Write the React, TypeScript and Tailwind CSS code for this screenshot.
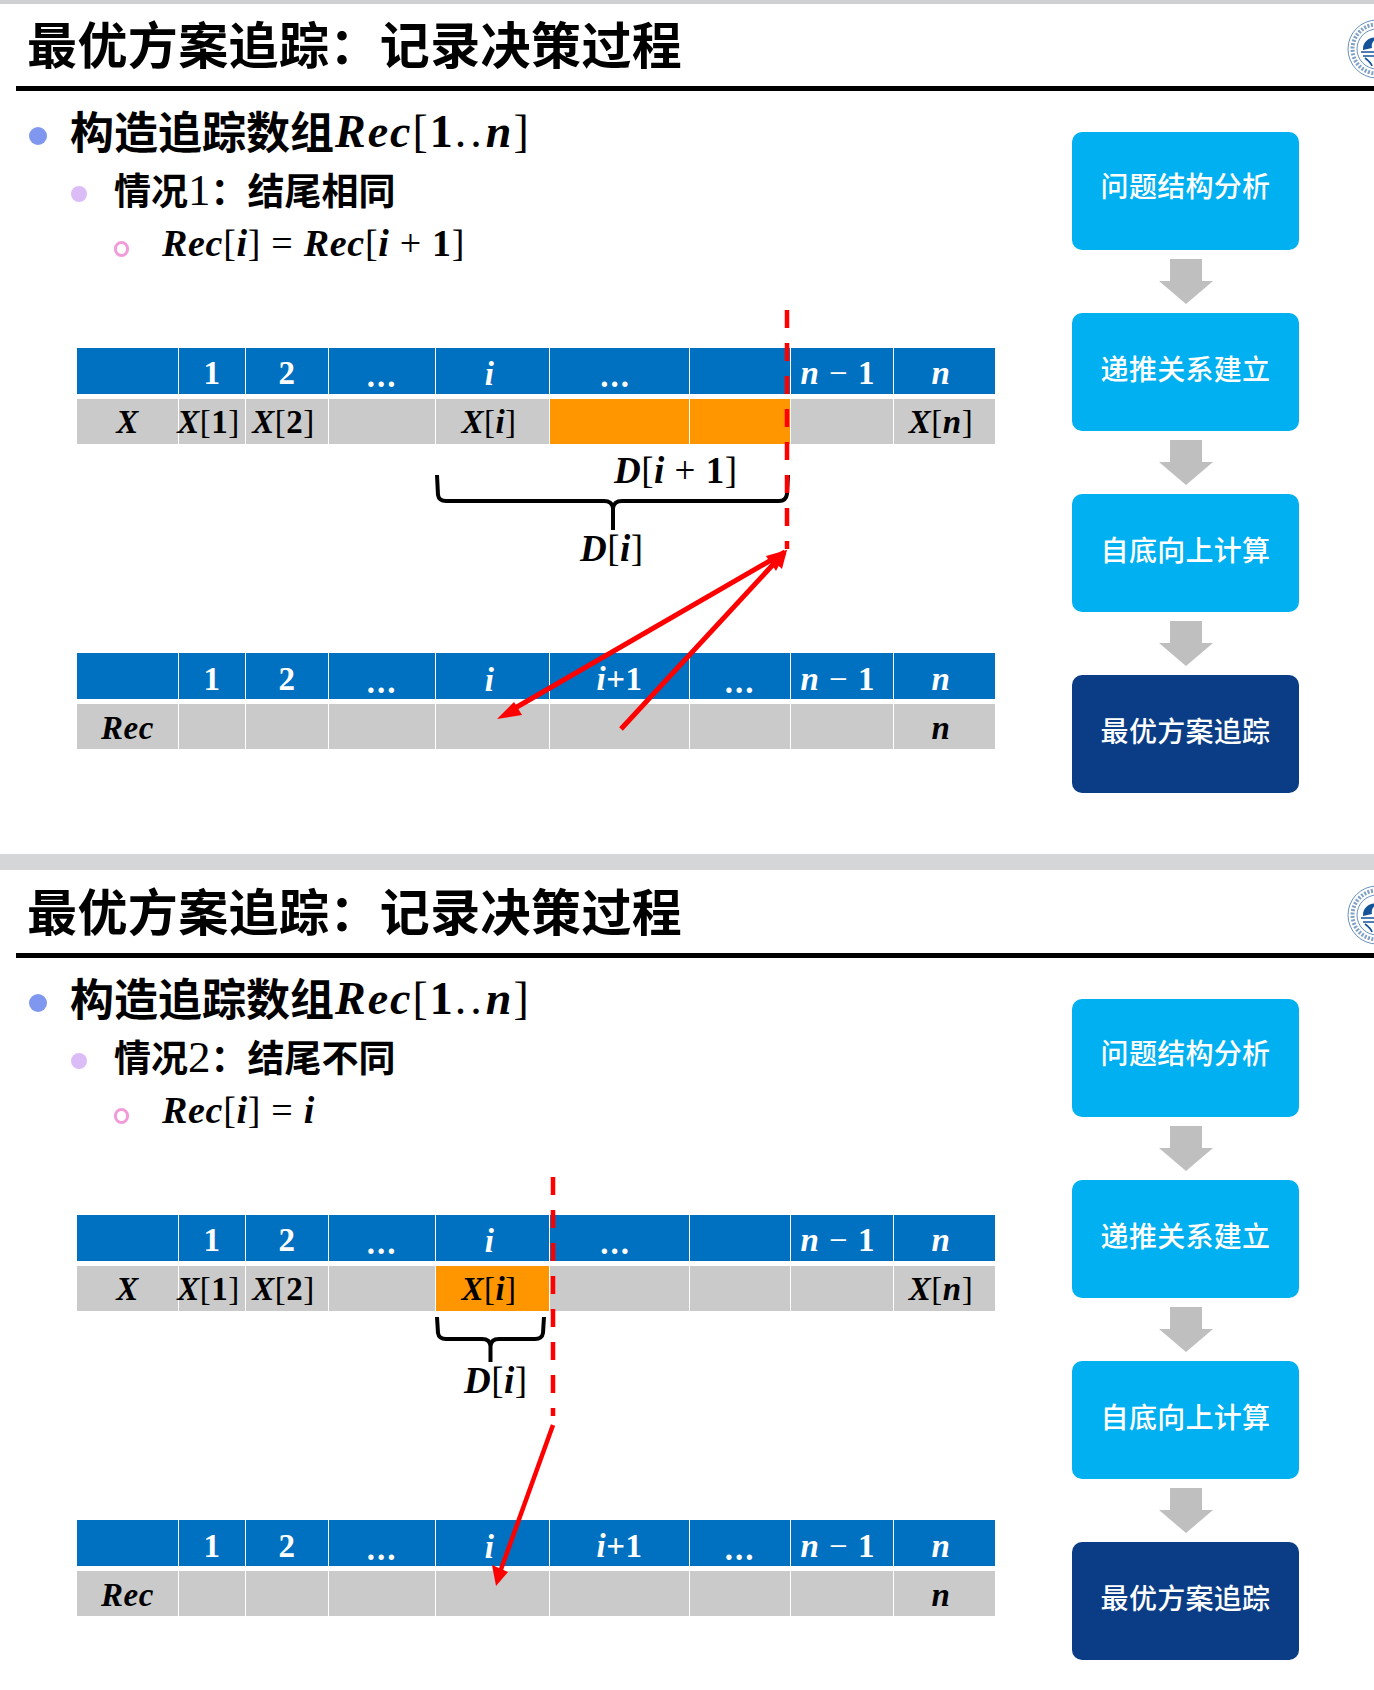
import React from "react";

const Mi = ({ children }: { children: React.ReactNode }) => <span className="font-bold italic">{children}</span>;
const Mb = ({ children }: { children: React.ReactNode }) => <span className="font-bold not-italic">{children}</span>;
const Br = ({ children }: { children: React.ReactNode }) => <span className="font-normal not-italic">{children}</span>;

const Sub = ({ v }: { v: React.ReactNode }) => (
  <span className="font-['Liberation_Serif',serif] tracking-[0.5px] whitespace-nowrap">
    {v}
  </span>
);

const Xi = ({ n, bold }: { n: string; bold?: boolean }) => (
  <Sub
    v={
      <>
        <Mi>X</Mi>
        <Br>[</Br>
        {bold ? <Mb>{n}</Mb> : <Mi>{n}</Mi>}
        <Br>]</Br>
      </>
    }
  />
);

const Dots = () => <span className="font-['Liberation_Serif',serif] font-bold tracking-[2px] pt-[6px] block">...</span>;
const I = ({ t }: { t: string }) => <Sub v={<Mi>{t}</Mi>} />;
const D1 = ({ t }: { t: string }) => <Sub v={<Mb>{t}</Mb>} />;
const N1 = () => (
  <span className="font-['Liberation_Serif',serif] whitespace-nowrap font-bold pr-[8px] tracking-[1px]">
    <i>n</i> <span className="font-normal">−</span> 1
  </span>
);

type Cell = { c?: React.ReactNode; o?: boolean; pr?: boolean };

function Row({ cells, head, low }: { cells: Cell[]; head?: boolean; low?: boolean }) {
  const pad = head ? (low ? "pt-[7px]" : "pt-[5px]") : low ? "pt-[3px]" : "pt-[1px]";
  return (
    <>
      {cells.map((x, i) => (
        <div
          key={i}
          className={`flex items-center justify-center text-[33px] leading-none ${head ? "h-[46px] text-white" : "h-[45px] text-black"} ${
            x.o ? "bg-[#ff9600]" : head ? "bg-[#0070c0]" : "bg-[#cacaca]"
          } ${x.pr ? "pr-[7px]" : ""} ${pad}`}
        >
          {x.c}
        </div>
      ))}
    </>
  );
}

function Table({ head, row, low }: { head: Cell[]; row: Cell[]; low?: boolean }) {
  return (
    <div className="grid grid-cols-[101px_66px_82px_106px_113px_139px_100px_102px_101px] gap-x-px gap-y-[5px] w-fit ml-[77px]">
      <Row cells={head} head low={low} />
      <Row cells={row} low={low} />
    </div>
  );
}

const Logo = () => (
  <svg width="60" height="60" viewBox="0 0 60 60" className="shrink-0" aria-hidden="true">
    <circle cx="30" cy="30" r="29" fill="none" stroke="#3f73ad" strokeWidth="0.8" />
    <circle cx="30" cy="30" r="24.5" fill="none" stroke="#4a78ad" strokeWidth="4" strokeDasharray="2 1.5" opacity="0.7" />
    <circle cx="30" cy="30" r="20" fill="none" stroke="#3f73ad" strokeWidth="0.8" />
    <path d="M16 30 C16 22 24 17 31 19 C26 21 24 25 25 29 L16 31 Z" fill="#14539a" />
    <path d="M14 33 L40 33 M16 37 L38 37" stroke="#14539a" strokeWidth="1.6" />
    <path d="M18 39 C22 42 24 44 25 47" stroke="#14539a" strokeWidth="1.6" fill="none" />
  </svg>
);

const FlowArrow = () => (
  <svg width="54" height="45" viewBox="0 0 54 45" className="my-[9px] self-center" aria-hidden="true">
    <polygon points="11,0 43,0 43,22 54,22 27,45 0,22 11,22" fill="#bfbfbf" />
  </svg>
);

const Box = ({ t, dark, first }: { t: string; dark?: boolean; first?: boolean }) => (
  <div
    className={`w-[227px] h-[118px] rounded-[10px] flex items-center justify-center ${first ? "pb-[12px]" : "pb-[8px]"} text-[28px] tracking-[0.3px] font-medium text-white font-['Noto_Sans_CJK_SC',sans-serif] ${
      dark ? "bg-[#0a3d85]" : "bg-[#00b0f0]"
    }`}
  >
    {t}
  </div>
);

function Flow() {
  return (
    <div className="flex flex-col pt-[41px]">
      <Box t="问题结构分析" first />
      <FlowArrow />
      <Box t="递推关系建立" />
      <FlowArrow />
      <Box t="自底向上计算" />
      <FlowArrow />
      <Box t="最优方案追踪" dark />
    </div>
  );
}

const DotB = ({ cls }: { cls: string }) => <span className={`block shrink-0 rounded-full ${cls}`} />;

function Bullets({ label, digit, rest, third }: { label: string; digit: string; rest: string; third: React.ReactNode }) {
  return (
    <div className="font-['Noto_Sans_CJK_SC',sans-serif] font-bold text-black">
      <div className="flex items-center h-[44px] mt-[19px] pl-[29px]">
        <DotB cls="w-[18px] h-[18px] bg-[#7f97ee] mt-[8px]" />
        <div className="ml-[23px] pb-[5px] flex items-center text-[44px] leading-none whitespace-nowrap">
          构造追踪数组
          <span className="font-['Liberation_Serif',serif] text-[46px] tracking-[2px] ml-[1px] pt-[4px]">
            <Mi>Rec</Mi>
            <Br>[</Br>
            <Mb>1</Mb>
            <span className="font-normal tracking-[4px]">..</span>
            <Mi>n</Mi>
            <Br>]</Br>
          </span>
        </div>
      </div>
      <div className="flex items-center h-[38px] mt-[17px] pl-[71px]">
        <DotB cls="w-[16px] h-[16px] bg-[#dcbcf7] mt-[8px]" />
        <div className="ml-[27px] text-[37px] leading-none whitespace-nowrap">
          {label}
          <span className="font-['Liberation_Serif',serif] font-normal text-[45px] leading-none">{digit}</span>
          {rest}
        </div>
      </div>
      <div className="flex items-center h-[36px] mt-[19px] pl-[114px]">
        <span className="block shrink-0 w-[15px] h-[16px] rounded-full border-[3px] border-[#f29bd9] mt-[5px]" />
        <div className="ml-[33px] pb-[6px] text-[38px] leading-none whitespace-nowrap font-['Liberation_Serif',serif] tracking-[0.7px]">{third}</div>
      </div>
    </div>
  );
}

const ShiftedI = () => (
  <span className="pr-[6px]">
    <I t="i" />
  </span>
);

const head1: Cell[] = [
  {},
  { c: <D1 t="1" /> },
  { c: <D1 t="2" /> },
  { c: <Dots /> },
  { c: <ShiftedI /> },
  { c: <span className="pr-[8px]"><Dots /></span> },
  {},
  { c: <N1 /> },
  { c: <I t="n" />, pr: true },
];
const head2: Cell[] = [
  {},
  { c: <D1 t="1" /> },
  { c: <D1 t="2" /> },
  { c: <Dots /> },
  { c: <ShiftedI /> },
  {
    c: (
      <Sub
        v={
          <>
            <Mi>i</Mi>
            <Mb>+1</Mb>
          </>
        }
      />
    ),
  },
  { c: <Dots /> },
  { c: <N1 /> },
  { c: <I t="n" />, pr: true },
];
const recRow: Cell[] = [
  { c: <I t="Rec" /> },
  {},
  {},
  {},
  {},
  {},
  {},
  {},
  { c: <I t="n" />, pr: true },
];

const Label = ({ children, cls }: { children: React.ReactNode; cls: string }) => (
  <div className={`absolute text-[37px] leading-none text-black whitespace-nowrap ${cls}`}>
    <Sub v={children} />
  </div>
);

function Slide({
  label,
  digit,
  rest,
  third,
  row,
  headH,
  overlay,
  h,
}: {
  label: string;
  digit: string;
  rest: string;
  third: React.ReactNode;
  row: Cell[];
  headH: string;
  overlay: React.ReactNode;
  h: string;
}) {
  return (
    <div className={`relative bg-white overflow-hidden ${h}`}>
      <div className={`flex items-center justify-between pl-[27px] ${headH}`}>
        <div className="font-['Noto_Sans_CJK_SC',sans-serif] font-bold text-[50px] tracking-[0.4px] leading-none text-black whitespace-nowrap pb-[6px]">
          最优方案追踪：记录决策过程
        </div>
        <div className="w-[27px] overflow-hidden self-start mt-[15px]">
          <Logo />
        </div>
      </div>
      <div className="h-[5px] bg-black ml-[16px]" />
      <div className="flex">
        <div className="w-[1072px] shrink-0">
          <Bullets label={label} digit={digit} rest={rest} third={third} />
          <div className="mt-[84px]">
            <Table head={head1} row={row} />
          </div>
          <div className="mt-[209px]">
            <Table head={head2} row={recRow} low />
          </div>
        </div>
        <Flow />
      </div>
      {overlay}
    </div>
  );
}

const Dash = ({ x, y1, y2 }: { x: number; y1: number; y2: number }) => (
  <line x1={x} y1={y1} x2={x} y2={y2} stroke="#ff0000" strokeWidth="4.5" strokeDasharray="18 15" />
);

function Overlay1() {
  return (
    <>
      <svg className="absolute left-0 top-0" width="1374" height="850" viewBox="0 4 1374 850" aria-hidden="true">
        <path
          d="M437 475 L438 495 Q439 501 446 501 L604 501 Q612 501 613 508 L613 530 M613 508 Q614 501 622 501 L779 501 Q786 501 787 494 L788 475"
          fill="none"
          stroke="#000"
          strokeWidth="4"
        />
        <Dash x={787} y1={310} y2={549} />
        <line x1="621" y1="729" x2="780" y2="557" stroke="#ff0000" strokeWidth="5" />
        <polygon points="787,550 782,569 770,558" fill="#ff0000" />
        <line x1="785" y1="552" x2="510" y2="711" stroke="#ff0000" strokeWidth="5" />
        <polygon points="497,719 514,702 522,715" fill="#ff0000" />
        <polygon points="787,550 766,556 776,571" fill="#ff0000" />
      </svg>
      <Label cls="left-[614px] top-[446px]">
        <Mi>D</Mi>
        <Br>[</Br>
        <Mi>i</Mi>
        <Br> + </Br>
        <Mb>1</Mb>
        <Br>]</Br>
      </Label>
      <Label cls="left-[580px] top-[524px]">
        <Mi>D</Mi>
        <Br>[</Br>
        <Mi>i</Mi>
        <Br>]</Br>
      </Label>
    </>
  );
}

function Overlay2() {
  return (
    <>
      <svg className="absolute left-0 top-0" width="1374" height="820" viewBox="0 870 1374 820" aria-hidden="true">
        <path
          d="M437 1317 L438 1333 Q439 1339 446 1339 L482 1339 Q490 1339 490.5 1346 L490.5 1362 M490.5 1346 Q491 1339 499 1339 L535 1339 Q542 1339 543 1333 L544 1317"
          fill="none"
          stroke="#000"
          strokeWidth="4"
        />
        <Dash x={553} y1={1177} y2={1416} />
        <line x1="553" y1="1425" x2="500" y2="1572" stroke="#ff0000" strokeWidth="4.5" />
        <polygon points="496,1586 492,1565 508,1572" fill="#ff0000" />
      </svg>
      <Label cls="left-[464px] top-[490px]">
        <Mi>D</Mi>
        <Br>[</Br>
        <Mi>i</Mi>
        <Br>]</Br>
      </Label>
    </>
  );
}

const rowX1: Cell[] = [
  { c: <I t="X" /> },
  { c: <Xi n="1" bold />, pr: true },
  { c: <Xi n="2" bold />, pr: true },
  {},
  { c: <Xi n="i" />, pr: true },
  { o: true },
  { o: true },
  {},
  { c: <Xi n="n" />, pr: true },
];
const rowX2: Cell[] = [
  { c: <I t="X" /> },
  { c: <Xi n="1" bold />, pr: true },
  { c: <Xi n="2" bold />, pr: true },
  {},
  { c: <Xi n="i" />, o: true, pr: true },
  {},
  {},
  {},
  { c: <Xi n="n" />, pr: true },
];

export default function App() {
  return (
    <div className="w-[1374px] h-[1690px] overflow-hidden bg-white">
      <div className="h-[4px] bg-[#cfd0d2]" />
      <Slide
        h="h-[850px]"
        headH="h-[82px]"
        label="情况"
        digit="1"
        rest="：结尾相同"
        third={
          <>
            <Mi>Rec</Mi>
            <Br>[</Br>
            <Mi>i</Mi>
            <Br>] = </Br>
            <Mi>Rec</Mi>
            <Br>[</Br>
            <Mi>i</Mi>
            <Br> + </Br>
            <Mb>1</Mb>
            <Br>]</Br>
          </>
        }
        row={rowX1}
        overlay={<Overlay1 />}
      />
      <div className="h-[16px] bg-[#d5d6d8]" />
      <Slide
        h="h-[820px]"
        headH="h-[83px]"
        label="情况"
        digit="2"
        rest="：结尾不同"
        third={
          <>
            <Mi>Rec</Mi>
            <Br>[</Br>
            <Mi>i</Mi>
            <Br>] = </Br>
            <Mi>i</Mi>
          </>
        }
        row={rowX2}
        overlay={<Overlay2 />}
      />
    </div>
  );
}
